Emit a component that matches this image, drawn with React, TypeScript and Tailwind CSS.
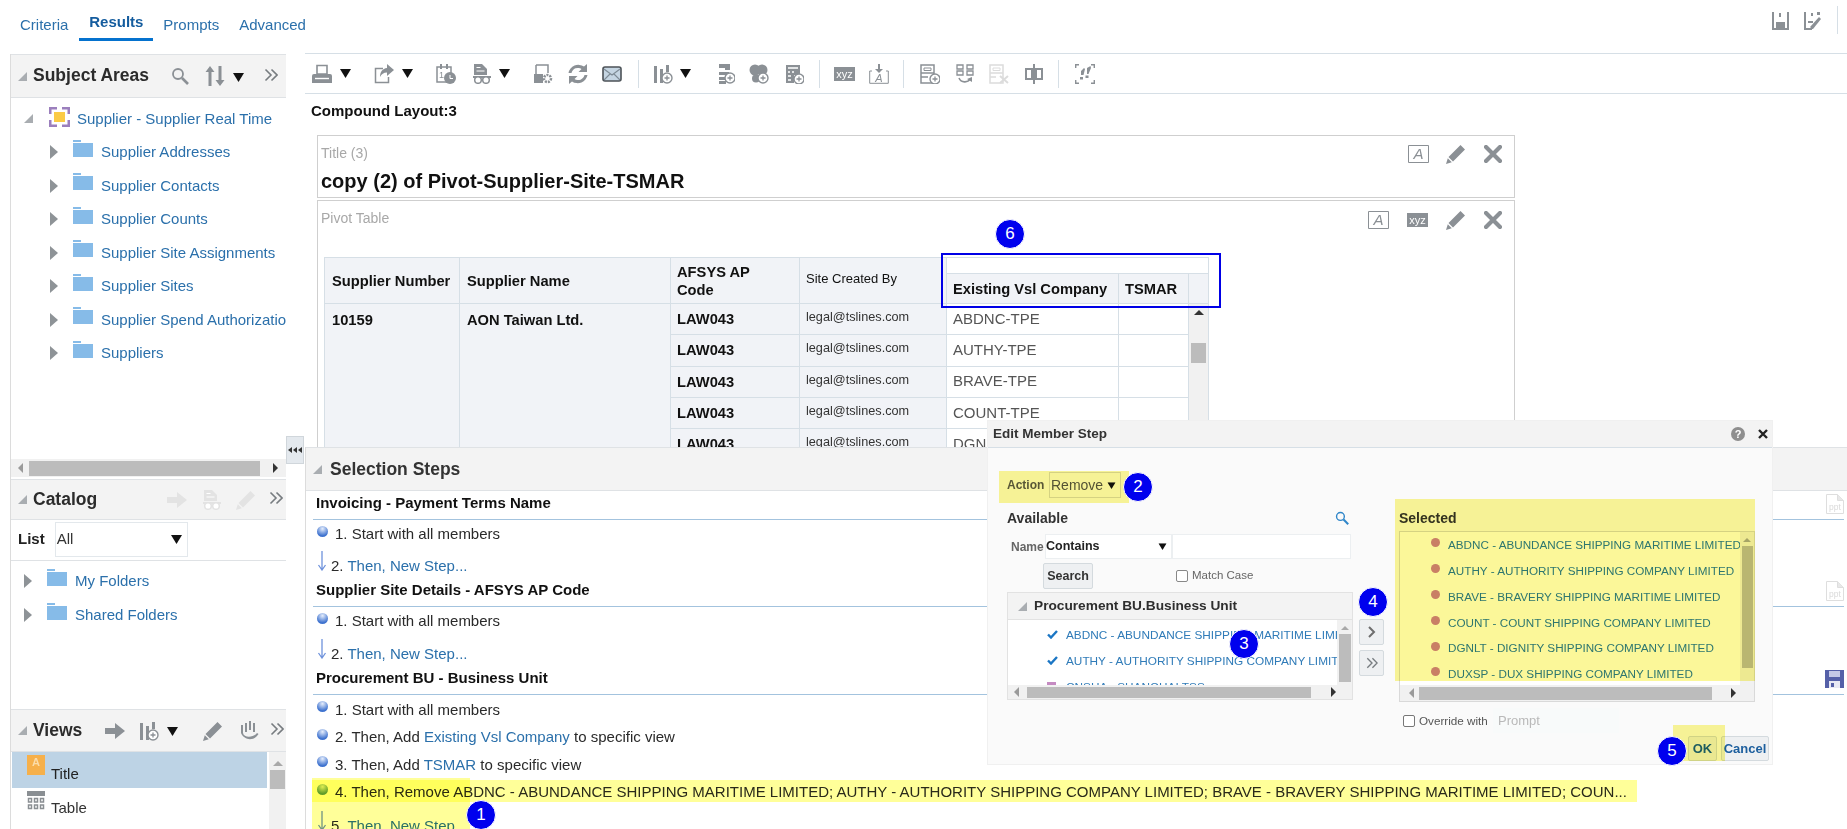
import React from "react";

type P = { className?: string };

const Gray = "text-[#8b9095]";

const Svg = ({ className = "", children, w = 20, h = 20 }: P & { children: React.ReactNode; w?: number; h?: number }) => (
  <svg viewBox={`0 0 ${w} ${h}`} width={w} height={h} className={`flex-none ${className}`} fill="currentColor">
    {children}
  </svg>
);

const Caret = ({ className = "" }: P) => (
  <svg viewBox="0 0 11 9" width="11" height="9" className={`flex-none ${className}`}><path d="M0 0h11L5.500 9z" fill="#111" /></svg>
);
const TriDown = ({ className = "" }: P) => (
  <svg viewBox="0 0 9 9" width="9" height="9" className={`flex-none ${className}`}><path d="M9 0v9H0z" fill="#a9adb1" /></svg>
);
const TriRight = ({ className = "" }: P) => (
  <svg viewBox="0 0 8 14" width="8" height="14" className={`flex-none ${className}`}><path d="M0 0l8 7-8 7z" fill="#8e9397" /></svg>
);
const Folder = ({ className = "" }: P) => (
  <svg viewBox="0 0 20 17" width="20" height="17" className={`flex-none ${className}`}>
    <path d="M0 0h8v2H0z" fill="#86bbe8" />
    <path d="M0 3h20v14H0z" fill="#86bbe8" />
  </svg>
);
const Chevrons = ({ className = "" }: P) => (
  <svg viewBox="0 0 14 14" width="14" height="14" className={`flex-none ${className}`} fill="none" stroke="#777c80" strokeWidth="1.600">
    <path d="M1.500 1.500L7 7l-5.500 5.500M7.500 1.500L13 7l-5.500 5.500" />
  </svg>
);
const Pencil = ({ className = "" }: P) => (
  <Svg className={className}>
    <path d="M14.500 1l4.500 4.500L7 17.500 2.500 13zM1.800 14.200l4 4L0 20z" />
  </Svg>
);
const Cross = ({ className = "" }: P) => (
  <svg viewBox="0 0 18 18" width="18" height="18" className={`flex-none ${className}`}>
    <path d="M2 2l14 14M16 2L2 16" stroke="currentColor" strokeWidth="4.200" strokeLinecap="round" />
  </svg>
);
const FrameA = ({ className = "" }: P) => (
  <svg viewBox="0 0 21 18" width="21" height="18" className={`flex-none ${className}`}>
    <path d="M4 .5H.5v17H4M17 .5h3.500v17H17M4 .5h13M4 17.500h13" fill="none" stroke="currentColor" />
    <text x="10.500" y="14" textAnchor="middle" fontSize="15" fontStyle="italic" fill="currentColor" fontFamily="Liberation Sans">A</text>
  </svg>
);
const Xyz = ({ className = "" }: P) => (
  <svg viewBox="0 0 21 14" width="21" height="14" className={`flex-none ${className}`}>
    <rect width="21" height="14" fill="currentColor" />
    <text x="10.500" y="11" textAnchor="middle" fontSize="11" fill="#fff" fontFamily="Liberation Sans">xyz</text>
  </svg>
);
const Plus = ({ x = 14, y = 14 }: { x?: number; y?: number }) => (
  <g>
    <circle cx={x} cy={y} r="5" fill="#fff" stroke="currentColor" strokeWidth="1.400" />
    <path d={`M${x - 2.500} ${y}h5M${x} ${y - 2.500}v5`} stroke="currentColor" strokeWidth="1.300" />
  </g>
);
const Printer = () => (
  <Svg><path d="M5 1.500h10V10H5z" fill="none" stroke="currentColor" strokeWidth="1.600" /><path d="M2 10h16a2 2 0 0 1 2 2v7H0v-7a2 2 0 0 1 2-2z" /><path d="M3 14.500h14" stroke="#fff" strokeWidth="1.400" /></Svg>
);
const Share = () => (
  <Svg><path d="M9 4.500H1.500v14h13V13" fill="none" stroke="currentColor" strokeWidth="1.500" /><path d="M13 0l7 6-7 6V8.500C9.500 8.500 7.500 10 6 13c0-5 2.500-8.500 7-9z" /></Svg>
);
const Sched = () => (
  <Svg><path d="M1 3h14v15H1z" fill="none" stroke="currentColor" strokeWidth="1.500" /><path d="M4 0h2v5H4zM10 0h2v5h-2z" /><text x="3" y="14" fontSize="9" fontFamily="Liberation Sans" fill="currentColor">1</text><circle cx="14" cy="14" r="6" /><path d="M14 11v3.500h3" stroke="#fff" fill="none" /></Svg>
);
const DocGlasses = () => (
  <Svg><path d="M2 0h8l5 5v6H2z" /><path d="M1 12h18v2H1z" /><path d="M4.500 3.500h4M4.500 7h8" stroke="#fff" /><circle cx="6" cy="16" r="3.300" fill="#fff" stroke="currentColor" strokeWidth="1.500" /><circle cx="14" cy="16" r="3.300" fill="#fff" stroke="currentColor" strokeWidth="1.500" /></Svg>
);
const DocGear = () => (
  <Svg><path d="M3 1h12v8M3 1v9" fill="none" stroke="currentColor" strokeWidth="1.500" /><path d="M1 10h9v9H1z" /><circle cx="14.500" cy="14.500" r="3.500" fill="none" stroke="currentColor" strokeWidth="2.500" strokeDasharray="2 1" /></Svg>
);
const Refresh = () => (
  <Svg><path d="M3.500 9a6.500 6.500 0 0 1 10-4l-3 3h8.500V0l-3 2.600A10 10 0 0 0 .500 9zM16.500 11a6.500 6.500 0 0 1-10 4l3-3H1v8l3-2.600A10 10 0 0 0 19.500 11z" /></Svg>
);
const Mail = () => (
  <Svg><rect x="1" y="3" width="18" height="14" rx="2" fill="#c5d5e2" stroke="#4c5257" strokeWidth="1.600" /><path d="M2 5l8 6 8-6M2 16l6-6M18 16l-6-6" fill="none" stroke="#7e8b95" strokeWidth="1.100" /></Svg>
);
const ChartPlus = () => (
  <Svg><path d="M1 2h3v17H1zM7 5h3v14H7zM13 1h3v7h-3z" /><Plus /></Svg>
);
const ListPlus = () => (
  <Svg w={16}><path d="M0 0h11v6H6V4H0zM0 8h10v3H0zM0 13h7v3H0zM0 17h7v3H0z" /><Plus x={11} y={14} /></Svg>
);
const CirclesPlus = () => (
  <Svg><circle cx="6" cy="6" r="5.500" /><circle cx="13" cy="6" r="5.500" /><circle cx="7" cy="14.500" r="4" /><Plus /></Svg>
);
const CalcPlus = () => (
  <svg viewBox="0 0 18 20" width="18" height="20" className="flex-none" fill="currentColor"><path d="M0 1h14v10H8v8H0z" /><path d="M2 4h10M2 8h2M6 8h2M2 12h3M2 16h3" stroke="#fff" strokeWidth="1.500" /><Plus x={13} y={15} /></svg>
);
const ArrowInA = () => (
  <Svg><path d="M3 7H.7v12.300h18.600V7H17" fill="none" stroke="currentColor" /><path d="M9 0h2v5h3l-4 4-4-4h3z" /><text x="10" y="18" textAnchor="middle" fontSize="11" fontStyle="italic" fontFamily="Liberation Sans">A</text></Svg>
);
const BoxesPlus = () => (
  <Svg><path d="M1 1h13v18H1z" fill="none" stroke="currentColor" strokeWidth="1.500" /><path d="M1 9h13M1 13h7" stroke="currentColor" strokeWidth="1.500" /><path d="M4 4h7v2.500H4z" fill="none" stroke="currentColor" /><Plus x={15} y={15} /></Svg>
);
const BoxesCurve = () => (
  <svg viewBox="0 0 18 20" width="18" height="20" className="flex-none" fill="none" stroke="currentColor" strokeWidth="1.300"><path d="M1 1h6v4H1zM1 7h6v4H1zM11 1h6v4h-6zM11 7h6v4h-6z" /><path d="M3 14c2 5 9 5 11 1" strokeWidth="1.600" /><path d="M11 15l5-2v5z" fill="currentColor" stroke="none" /></svg>
);
const BoxesX = () => (
  <Svg className="text-[#dcdcdc]"><path d="M1 1h13v18H1z" fill="none" stroke="currentColor" strokeWidth="1.500" /><path d="M1 9h13M1 13h6" stroke="currentColor" strokeWidth="1.500" /><path d="M4 4h7v2.500H4z" fill="none" stroke="currentColor" /><path d="M11 12l8 7M19 12l-8 7" stroke="currentColor" strokeWidth="2" /></Svg>
);
const Column = () => (
  <Svg><path d="M9 0h2v20H9z" /><path d="M2 5h6v10H2zM12 5h6v10h-6z" fill="none" stroke="currentColor" strokeWidth="2" /></Svg>
);
const Steps = () => (
  <Svg><path d="M4 .7H.7V4M16 .7h3.300V4M4 19.300H.7V16M16 19.300h3.300V16" fill="none" stroke="currentColor" strokeWidth="1.400" /><path d="M6 7l3-3 1 1-1.500 6H6zM5 13h3v2.500H5zM12 4l3.500-2 .5 2-2.500 6H12zM10.500 11.500h3V14h-3z" /></Svg>
);
const Magnifier = ({ className = "" }: P) => (
  <svg viewBox="0 0 18 18" width="18" height="18" className={`flex-none ${className}`} fill="none" stroke="currentColor"><circle cx="7" cy="7" r="5" strokeWidth="1.800" /><path d="M11 11l6 6" strokeWidth="2.600" /></svg>
);
const Sort = () => (
  <Svg className={Gray}><path d="M5 0l4.500 6H6.500v14h-3V6H.500zM15 20l-4.500-6h3V0h3v14h3z" /></Svg>
);
const ArrowFat = ({ className = "" }: P) => (
  <Svg className={className}><path d="M0 7h10V2l10 8-10 8v-5H0z" /></Svg>
);
const GesturePlus = () => (
  <Svg><path d="M5 2h2v9H5zM9 0h2v9H9zM13 2h2v9h-2z" /><path d="M1 4h2v8c1 5 10 5 14 0l1.500 1c-4 7-14 7-17.500-1z" /></Svg>
);
const TitleIcon = () => (
  <svg viewBox="0 0 18 20" width="18" height="20" className="flex-none"><rect width="18" height="20" fill="#f6b04b" /><text x="9" y="11" textAnchor="middle" fontSize="11" fill="#fbdca9" fontFamily="Liberation Sans" fontWeight="700">A</text></svg>
);
const GridIcon = () => (
  <svg viewBox="0 0 18 20" width="18" height="20" className="flex-none"><path d="M0 0h18v5H0z" fill="#8a8f93" /><path d="M1.500 7.500h3v3.500h-3zM7.500 7.500h3v3.500h-3zM13.500 7.500h3v3.500h-3zM1.500 14h3v3.500h-3zM7.500 14h3v3.500h-3zM13.500 14h3v3.500h-3z" fill="none" stroke="#8a8f93" strokeWidth="1.500" /></svg>
);
const SubjectIcon = () => (
  <svg viewBox="0 0 21 20" width="21" height="20" className="flex-none">
    <path d="M0 0h8v2.500H2.500V7H0zM13 0h8v7h-2.500V2.500H13zM0 13h2.500v4.500H8V20H0zM18.500 13H21v7h-8v-2.500h5.500z" fill="#9b7fbd" />
    <rect x="5" y="5" width="11" height="10" fill="#fbcb45" />
  </svg>
);
const PptDoc = () => (
  <svg viewBox="0 0 18 20" width="18" height="20" className="flex-none">
    <path d="M.5.500h11l6 6v13H.5z" fill="#fff" stroke="#dedede" />
    <path d="M11.500.500v6h6" fill="#e8e8e8" stroke="#dedede" />
    <text x="9" y="16" textAnchor="middle" fontSize="8.500" fill="#dadada" fontFamily="Liberation Sans">ppt</text>
  </svg>
);
const SaveBlue = () => (
  <svg viewBox="0 0 19 18" width="19" height="18" className="flex-none">
    <path d="M0 0h19v18H0z" fill="#5560a8" /><path d="M4 1h11v6H4z" fill="#c4c8e6" /><path d="M4 11h11v7H4z" fill="#e8e9f4" /><path d="M6 13h3v4H6z" fill="#5560a8" />
  </svg>
);
const SaveTop = () => (
  <svg viewBox="0 0 17 18" width="17" height="18" className="flex-none text-[#8b9095]">
    <path d="M0 0h2v18H0zM15 0h2v18h-2zM2 16h13v2H2zM4 10h9v6H4z" fill="currentColor" /><path d="M7 1h2v4H7z" fill="currentColor" />
  </svg>
);
const SaveAsTop = () => (
  <svg viewBox="0 0 17 18" width="17" height="18" className="flex-none text-[#8b9095]">
    <path d="M0 0h2v18H0zM2 16h6v2H2zM4 9h5v2H4zM7 1h2v3H7zM13 0h3v3h-3z" fill="currentColor" /><path d="M15 5l2 2-8 10H6.500v-2.500z" fill="currentColor" />
  </svg>
);

const Bullet = ({ green = false }: { green?: boolean }) => (
  <span className={`block flex-none w-[11px] h-[11px] rounded-full -mt-[6px] ${green ? "bg-[radial-gradient(circle_at_50%_25%,#dfeedd,#5f9c70_70%)]" : "bg-[radial-gradient(circle_at_50%_25%,#e6eefc,#3f73cf_70%)]"}`} />
);
const DownArrow = () => (
  <svg viewBox="0 0 10 20" width="10" height="20" className="flex-none -mt-[10px]" fill="none" stroke="#6f93dc" strokeWidth="1.300"><path d="M5 0v18M1.500 14L5 19l3.500-5" /></svg>
);

const Link = ({ children }: { children: React.ReactNode }) => <span className="text-[#2b70ab]">{children}</span>;

function PanelHead({ title, children, h, tri = "ml-[7px]" }: { title: string; children?: React.ReactNode; h: string; tri?: string }) {
  return (
    <div className={`flex items-center flex-none border-y border-[#dfe2e5] bg-[#f3f3f3] ${h}`}>
      <TriDown className={tri} />
      <span className="ml-[6px] -mt-[1px] text-[17.500px] font-bold text-[#2b2b2b]">{title}</span>
      {children}
    </div>
  );
}

const TreeRow = ({ label, root = false }: { label: string; root?: boolean }) =>
  root ? (
    <div className="flex items-center h-[33.500px] whitespace-nowrap">
      <TriDown className="ml-[13px]" />
      <span className="ml-[16px] -mt-[4px]"><SubjectIcon /></span>
      <span className="ml-[7px] text-[15px] text-[#2b70ab]">{label}</span>
    </div>
  ) : (
    <div className="flex items-center h-[33.500px] whitespace-nowrap">
      <TriRight className="ml-[39px]" />
      <span className="ml-[15px] -mt-[8px]"><Folder /></span>
      <span className="ml-[8px] text-[15px] text-[#2b70ab]">{label}</span>
    </div>
  );

const HScroll = ({ h, thumb, left, right }: { h: string; thumb: string; left: string; right: string }) => (
  <div className={`flex items-center bg-[#f1f1f1] flex-none ${h}`}>
    <svg viewBox="0 0 5 10" width="5" height="10" className={`flex-none ${left}`}><path d="M5 0L0 5l5 5z" fill="#9a9a9a" /></svg>
    <div className={`h-[calc(100%-3px)] bg-[#bcbcbc] ${thumb}`} />
    <svg viewBox="0 0 5 10" width="5" height="10" className={`flex-none ${right}`}><path d="M0 0l5 5-5 5z" fill="#333" /></svg>
  </div>
);

function Left() {
  return (
    <div className="flex flex-col flex-none w-[276px] ml-[10px] h-[775px] border-l border-[#dcdcdc]">
      {/* Subject Areas */}
      <div className="flex flex-col h-[423px] flex-none">
        <PanelHead title="Subject Areas" h="h-[44px]">
          <Magnifier className={`ml-[22px] ${Gray}`} />
          <span className="ml-[16px]"><Sort /></span>
          <Caret className="ml-[8px] mt-[3px]" />
          <Chevrons className="ml-[20px] -mt-[3px]" />
        </PanelHead>
        <div className="flex-1 overflow-hidden pt-[4px]">
          <TreeRow root label="Supplier - Supplier Real Time" />
          {["Supplier Addresses", "Supplier Contacts", "Supplier Counts", "Supplier Site Assignments", "Supplier Sites", "Supplier Spend Authorization", "Suppliers"].map((t) => (
            <TreeRow key={t} label={t} />
          ))}
        </div>
        <HScroll h="h-[18px]" thumb="w-[231px] ml-[6px]" left="ml-[7px]" right="ml-[13px]" />
      </div>
      {/* Catalog */}
      <div className="flex flex-col h-[230px] flex-none mt-[2px]">
        <PanelHead title="Catalog" h="h-[41px]">
          <ArrowFat className="ml-[70px] text-[#e3e3e3]" />
          <span className="ml-[15px] text-[#e3e3e3]"><DocGlasses /></span>
          <Pencil className="ml-[14px] text-[#e3e3e3]" />
          <Chevrons className="ml-[13px] -mt-[3px]" />
        </PanelHead>
        <div className="flex items-center h-[41px] flex-none border-b border-[#dfe2e5] pb-[1px]">
          <span className="ml-[7px] text-[15px] font-bold text-[#222]">List</span>
          <div className="flex items-center justify-between w-[133px] h-[35px] ml-[10px] border border-[#e3e8ec] px-[1px] pr-[5px] text-[15px] text-[#333]">
            All <Caret />
          </div>
        </div>
        <div className="flex-1 pt-[3px]">
          {["My Folders", "Shared Folders"].map((t) => (
            <div key={t} className="flex items-center h-[34px] whitespace-nowrap">
              <TriRight className="ml-[13px]" />
              <span className="ml-[15px] -mt-[8px]"><Folder /></span>
              <span className="ml-[8px] text-[15px] text-[#2b70ab]">{t}</span>
            </div>
          ))}
        </div>
      </div>
      {/* Views */}
      <div className="flex flex-col flex-1 min-h-0">
        <PanelHead title="Views" h="h-[43px]">
          <ArrowFat className={`ml-[23px] ${Gray}`} />
          <span className={`ml-[14px] ${Gray}`}><ChartPlus /></span>
          <Caret className="ml-[8px] mt-[2px]" />
          <Pencil className={`ml-[25px] ${Gray}`} />
          <span className={`ml-[17px] ${Gray}`}><GesturePlus /></span>
          <Chevrons className="ml-[10px] -mt-[3px]" />
        </PanelHead>
        <div className="flex flex-1 min-h-0">
          <div className="flex-1 pl-[1px]">
            <div className="flex items-center h-[36px] bg-[#bdd3e5]">
              <span className="ml-[15px] -mt-[10px]"><TitleIcon /></span>
              <span className="ml-[6px] mt-[8px] text-[15px] text-[#222]">Title</span>
            </div>
            <div className="flex items-center h-[36px]">
              <span className="ml-[15px] -mt-[10px]"><GridIcon /></span>
              <span className="ml-[6px] mt-[5px] text-[15px] text-[#333]">Table</span>
            </div>
          </div>
          <div className="flex flex-col items-center w-[17px] ml-[2px] bg-[#f1f1f1] pt-[9px]">
            <svg viewBox="0 0 10 5" width="10" height="5"><path d="M5 0l5 5H0z" fill="#a9a9a9" /></svg>
            <div className="w-[15px] h-[19px] mt-[4px] bg-[#bcbcbc]" />
          </div>
        </div>
      </div>
    </div>
  );
}

const Toolbar = () => (
  <div className={`flex items-center flex-none h-[41px] border-y border-[#d6dfe6] pl-[7px] ${Gray}`}>
    <Printer /><Caret className="ml-[8px]" />
    <span className="ml-[23px]"><Share /></span><Caret className="ml-[8px]" />
    <span className="ml-[23px]"><Sched /></span>
    <span className="ml-[16px]"><DocGlasses /></span><Caret className="ml-[7px]" />
    <span className="ml-[23px]"><DocGear /></span>
    <span className="ml-[15px]"><Refresh /></span>
    <span className="ml-[14px]"><Mail /></span>
    <div className="w-px h-[28px] bg-[#d6dfe6] ml-[16px]" />
    <span className="ml-[14px]"><ChartPlus /></span><Caret className="ml-[7px]" />
    <span className="ml-[28px]"><ListPlus /></span>
    <span className="ml-[14px]"><CirclesPlus /></span>
    <span className="ml-[17px]"><CalcPlus /></span>
    <div className="w-px h-[28px] bg-[#d6dfe6] ml-[15px]" />
    <span className="ml-[14px]"><Xyz /></span>
    <span className="ml-[14px]"><ArrowInA /></span>
    <div className="w-px h-[28px] bg-[#d6dfe6] ml-[14px]" />
    <span className="ml-[16px]"><BoxesPlus /></span>
    <span className="ml-[16px]"><BoxesCurve /></span>
    <span className="ml-[15px]"><BoxesX /></span>
    <span className="ml-[15px]"><Column /></span>
    <div className="w-px h-[28px] bg-[#d6dfe6] ml-[14px]" />
    <span className="ml-[16px]"><Steps /></span>
  </div>
);

const th = "border border-[#d6dfe6] bg-[#f1f3f7] px-[7px] text-left text-[14.700px] font-bold text-[#111] leading-[18px]";
const tdHead = "border border-[#d6dfe6] bg-[#f1f3f7] px-[7px] align-top pt-[5px] text-[14.700px] font-bold text-[#111]";
const tdPlain = "border border-[#d6dfe6] px-[6px] text-[15px] text-[#555]";

function Pivot() {
  const rows = ["ABDNC-TPE", "AUTHY-TPE", "BRAVE-TPE", "COUNT-TPE", "DGNLT-TPE"];
  return (
    <table className="table-fixed border-collapse w-[884px]">
      <colgroup>
        <col className="w-[135px]" /><col className="w-[211px]" /><col className="w-[129px]" /><col className="w-[147px]" />
        <col className="w-[172px]" /><col className="w-[70px]" /><col className="w-[20px]" />
      </colgroup>
      <thead>
        <tr className="h-[16px]">
          <th rowSpan={2} className={`${th} whitespace-nowrap`}>Supplier Number</th>
          <th rowSpan={2} className={th}>Supplier Name</th>
          <th rowSpan={2} className={`${th} !px-[6px]`}>AFSYS AP<br />Code</th>
          <th rowSpan={2} className={`${th} !px-[6px] !font-normal !text-[13px] pb-[3px]`}>Site Created By</th>
          <th colSpan={3} className="border border-[#d6dfe6] bg-white" />
        </tr>
        <tr className="h-[30px]">
          <th className={`${th} !px-[6px] whitespace-nowrap`}>Existing Vsl Company</th>
          <th className={`${th} !px-[6px]`}>TSMAR</th>
          <th className="border border-[#d6dfe6] bg-[#f1f3f7]" />
        </tr>
      </thead>
      <tbody>
        {rows.map((r, i) => (
          <tr key={r} className="h-[31.300px]">
            {i === 0 && <td rowSpan={5} className={tdHead}>10159</td>}
            {i === 0 && <td rowSpan={5} className={tdHead}>AON Taiwan Ltd.</td>}
            <td className="border border-[#d6dfe6] bg-[#f1f3f7] px-[6px] text-[14.700px] font-bold text-[#111]">LAW043</td>
            <td className="border border-[#d6dfe6] bg-[#f1f3f7] px-[6px] pb-[3px] text-[12.700px] text-[#333]">legal@tslines.com</td>
            <td className={tdPlain}>{r}</td>
            <td className="border border-[#d6dfe6]" />
            {i === 0 && (
              <td rowSpan={5} className="border border-[#d6dfe6] bg-[#f1f1f1] align-top pt-[6px] px-[2px]">
                <svg viewBox="0 0 10 5" width="10" height="5" className="mx-auto"><path d="M5 0l5 5H0z" fill="#333" /></svg>
                <div className="w-[15px] h-[20px] mt-[28px] mx-auto bg-[#bcbcbc]" />
              </td>
            )}
          </tr>
        ))}
      </tbody>
    </table>
  );
}

function StepRow({ children, h = "h-[27.500px]" }: { children: React.ReactNode; h?: string }) {
  return <div className={`flex items-center gap-[7px] whitespace-nowrap text-[15px] text-[#2a2a2a] ${h}`}>{children}</div>;
}

function Section({ title, icon, children }: { title: string; icon: React.ReactNode; children: React.ReactNode }) {
  return (
    <div className="flex flex-col">
      <div className="flex items-center justify-between h-[28px] border-b border-[#a3c3de] ml-[7px] mr-[3px] box-content flex-none">
        <span className="ml-[3px] -mt-[4px] text-[15px] font-bold text-[#111]">{title}</span>
        <span className="-mt-[3px]">{icon}</span>
      </div>
      <div className="ml-[11px]">{children}</div>
    </div>
  );
}

function Selection() {
  return (
    <div className="flex flex-col flex-1 min-h-0 overflow-hidden border-l border-[#dcdcdc]">
      <div className="flex items-center flex-none h-[44px] border-y border-[#dfe2e5] bg-[#f3f3f3]">
        <TriDown className="ml-[7px]" />
        <span className="ml-[8px] text-[17.500px] font-bold text-[#333]">Selection Steps</span>
      </div>
      <Section title="Invoicing - Payment Terms Name" icon={<PptDoc />}>
        <StepRow h="h-[28px]"><Bullet /><span>1. Start with all members</span></StepRow>
        <StepRow h="h-[30px] pt-[6px]"><DownArrow /><span className="-ml-[3px]">2. <Link>Then, New Step...</Link></span></StepRow>
      </Section>
      <Section title="Supplier Site Details - AFSYS AP Code" icon={<PptDoc />}>
        <StepRow h="h-[29px]"><Bullet /><span>1. Start with all members</span></StepRow>
        <StepRow h="h-[30px] pt-[6px]"><DownArrow /><span className="-ml-[3px]">2. <Link>Then, New Step...</Link></span></StepRow>
      </Section>
      <Section title="Procurement BU - Business Unit" icon={<SaveBlue />}>
        <div className="h-[1px]" />
        <StepRow><Bullet /><span>1. Start with all members</span></StepRow>
        <StepRow><Bullet /><span>2. Then, Add <Link>Existing Vsl Company</Link> to specific view</span></StepRow>
        <StepRow><Bullet /><span>3. Then, Add <Link>TSMAR</Link> to specific view</span></StepRow>
        <StepRow><Bullet green /><span>4. Then, Remove ABDNC - ABUNDANCE SHIPPING MARITIME LIMITED; AUTHY - AUTHORITY SHIPPING COMPANY LIMITED; BRAVE - BRAVERY SHIPPING MARITIME LIMITED; COUN...</span></StepRow>
        <StepRow h="h-[34px] pt-[6px]"><DownArrow /><span className="-ml-[3px]">5. <Link>Then, New Step...</Link></span></StepRow>
      </Section>
    </div>
  );
}

const Ctl = ({ className = "", children }: P & { children?: React.ReactNode }) => (
  <div className={`flex items-center bg-white border border-[#eceff1] flex-none ${className}`}>{children}</div>
);
const Btn = ({ className = "", children }: P & { children?: React.ReactNode }) => (
  <div className={`flex items-center justify-center flex-none rounded-[2px] border border-[#d4dade] bg-[#eef0f2] font-bold ${className}`}>{children}</div>
);
const Check = () => (
  <svg viewBox="0 0 11 9" width="11" height="9" className="flex-none -mt-[3px]"><path d="M1 4.500L4 7.500 10 1" fill="none" stroke="#1b76c4" strokeWidth="2.400" /></svg>
);

function Dialog() {
  const selected = [
    "ABDNC - ABUNDANCE SHIPPING MARITIME LIMITED",
    "AUTHY - AUTHORITY SHIPPING COMPANY LIMITED",
    "BRAVE - BRAVERY SHIPPING MARITIME LIMITED",
    "COUNT - COUNT SHIPPING COMPANY LIMITED",
    "DGNLT - DIGNITY SHIPPING COMPANY LIMITED",
    "DUXSP - DUX SHIPPING COMPANY LIMITED",
  ];
  return (
    <div className="absolute left-[987px] top-[420px] z-10 flex flex-col w-[786px] h-[345px] bg-[#fafafa] border border-[#f0f0f0]">
      <div className="flex items-center flex-none h-[27px] border-b border-[#d6dfe6] bg-[#f3f3f3]">
        <span className="ml-[5px] text-[13.500px] font-bold text-[#333]">Edit Member Step</span>
        <span className="ml-auto flex items-center justify-center w-[14px] h-[14px] rounded-full bg-[#8e8e8e] text-white text-[11px] font-bold">?</span>
        <svg viewBox="0 0 10 10" width="10" height="10" className="ml-[13px] mr-[4px]"><path d="M1 1l8 8M9 1L1 9" stroke="#222" strokeWidth="2.400" /></svg>
      </div>
      <div className="flex h-[285px] flex-none pl-[19px]">
        <div className="flex flex-col w-[346px] flex-none pt-[24px]">
          <div className="flex items-center h-[26px] flex-none">
            <span className="w-[42px] flex-none text-[12px] font-bold text-[#5a5a5a]">Action</span>
            <div className="flex items-center justify-between w-[72px] h-[26px] border border-[#d9d9d9] pl-[1px] pr-[3px] text-[14px] text-[#555]">
              Remove <Caret className="scale-75" />
            </div>
          </div>
          <div className="flex items-center justify-between h-[20px] mt-[10px] flex-none">
            <span className="text-[14px] font-bold text-[#333]">Available</span>
            <Magnifier className="w-[14px] h-[14px] mr-[4px] text-[#2f86c9]" />
          </div>
          <div className="flex items-center h-[25px] mt-[6px] flex-none">
            <span className="ml-[4px] w-[34px] flex-none text-[12px] font-bold text-[#666]">Name</span>
            <Ctl className="w-[127px] h-[25px] justify-between pr-[3px] text-[12.500px] font-bold text-[#222]">Contains <Caret className="scale-75" /></Ctl>
            <Ctl className="w-[179px] h-[25px]" />
          </div>
          <div className="flex items-center h-[26px] mt-[4px] flex-none">
            <Btn className="w-[50px] h-[26px] ml-[36px] text-[12.500px] text-[#333]">Search</Btn>
            <span className="w-[12px] h-[12px] ml-[83px] rounded-[2px] border border-[#888] bg-white" />
            <span className="ml-[4px] text-[11.500px] text-[#666]">Match Case</span>
          </div>
          <div className="flex flex-col h-[108px] mt-[3px] flex-none border border-[#e2e2e2]">
            <div className="flex items-center flex-none h-[27px] border-b border-[#e2e2e2] bg-[#f3f3f3]">
              <TriDown className="ml-[10px]" />
              <span className="ml-[7px] text-[13.700px] font-bold text-[#2e2e2e]">Procurement BU.Business Unit</span>
            </div>
            <div className="flex flex-1 min-h-0">
              <div className="flex-1 min-w-0 bg-white overflow-hidden text-[11.800px] text-[#2f7bb8] whitespace-nowrap pt-[3px]">
                <div className="flex items-center h-[26px]"><span className="ml-[39px] flex-none"><Check /></span><span className="ml-[8px]">ABDNC - ABUNDANCE SHIPPING MARITIME LIMITED</span></div>
                <div className="flex items-center h-[26px]"><span className="ml-[39px] flex-none"><Check /></span><span className="ml-[8px]">AUTHY - AUTHORITY SHIPPING COMPANY LIMITED</span></div>
                <div className="flex items-center h-[26px]"><span className="ml-[39px] flex-none w-[9px] h-[9px] bg-[#c58bc2] -mt-[3px]" /><span className="ml-[10px]">CNSHA - SHANGHAI TSS</span></div>
              </div>
              <div className="flex flex-col items-center w-[15px] flex-none bg-[#f1f1f1] pt-[6px]">
                <svg viewBox="0 0 10 5" width="8" height="4"><path d="M5 0l5 5H0z" fill="#a9a9a9" /></svg>
                <div className="w-[12px] h-[48px] mt-[4px] bg-[#bcbcbc]" />
              </div>
            </div>
            <HScroll h="h-[14px]" thumb="w-[284px] ml-[8px]" left="ml-[6px]" right="ml-[20px]" />
          </div>
        </div>
        <div className="flex flex-col gap-[5px] w-[25px] ml-[6px] flex-none pt-[171px]">
          <Btn className="w-[25px] h-[26px]"><svg viewBox="0 0 8 12" width="8" height="12"><path d="M1 1l5 5-5 5" fill="none" stroke="#6e6e6e" strokeWidth="2" /></svg></Btn>
          <Btn className="w-[25px] h-[26px]"><Chevrons className="w-[12px] h-[12px]" /></Btn>
        </div>
        <div className="flex flex-col w-[356px] ml-[15px] flex-none pt-[60px]">
          <span className="h-[20px] flex items-center text-[14px] font-bold text-[#333]">Selected</span>
          <div className="flex flex-col h-[171px] mt-[3px] flex-none border border-[#d9d9d9] bg-white">
            <div className="flex flex-1 min-h-0">
              <div className="flex-1 min-w-0 overflow-hidden whitespace-nowrap text-[11.700px] text-[#2f7bb8]">
                {selected.map((s) => (
                  <div key={s} className="flex items-center h-[25.800px]">
                    <span className="block flex-none ml-[31px] w-[9px] h-[9px] rounded-full bg-[#cc83a8] -mt-[4px]" />
                    <span className="ml-[8px]">{s}</span>
                  </div>
                ))}
              </div>
              <div className="flex flex-col items-center w-[14px] flex-none bg-[#f1f1f1] pt-[6px]">
                <svg viewBox="0 0 10 5" width="8" height="4"><path d="M5 0l5 5H0z" fill="#a9a9a9" /></svg>
                <div className="w-[11px] h-[122px] mt-[4px] bg-[#bcbcbc]" />
              </div>
            </div>
            <HScroll h="h-[16px]" thumb="w-[293px] ml-[5px]" left="ml-[9px]" right="ml-[19px]" />
          </div>
          <div className="flex items-center h-[25px] mt-[6px] flex-none">
            <span className="w-[12px] h-[12px] ml-[4px] rounded-[2px] border border-[#777] bg-white flex-none" />
            <span className="ml-[4px] w-[74px] flex-none text-[11.700px] text-[#555]">Override with</span>
            <div className="flex items-center w-[126px] h-[25px] pl-[5px] bg-[#f8fafa] text-[13px] text-[#b9b9b9]">Prompt</div>
          </div>
        </div>
      </div>
      <div className="flex justify-end gap-[4px] pr-[3px] mt-[3px] flex-none">
        <Btn className="w-[29px] h-[25px] text-[13px] text-[#1d5f9e]">OK</Btn>
        <Btn className="w-[48px] h-[25px] text-[13px] text-[#1d5f9e]">Cancel</Btn>
      </div>
      {/* annotation highlights, placed over the dialog */}
      <div className="absolute left-[11px] top-[50px] w-[130px] h-[32px] bg-[#fbf799] mix-blend-multiply" />
      <div className="absolute left-[407px] top-[78px] w-[360px] h-[182px] bg-[#fbf799] mix-blend-multiply" />
      <div className="absolute left-[685px] top-[304px] w-[52px] h-[36px] bg-[#fbf799] mix-blend-multiply" />
    </div>
  );
}

const Badge = ({ n, className }: { n: number; className: string }) => (
  <div className={`absolute z-20 flex items-center justify-center w-[30px] h-[30px] rounded-full bg-[#0000ee] text-white text-[17px] border border-white ${className}`}>{n}</div>
);

export default function App() {
  return (
    <div className="relative w-[1847px] h-[829px] overflow-hidden bg-white font-['Liberation_Sans',Arial,sans-serif]">
      {/* Tabs */}
      <div className="flex items-start h-[54px] text-[15px] text-[#2b70ab]">
        <span className="ml-[20px] mt-[14px]">Criteria</span>
        <span className="ml-[11px] mt-[11px] h-[30px] w-[74px] text-center font-bold text-[#145c9e] border-b-[3px] border-[#0572ce]">Results</span>
        <span className="ml-[10px] mt-[14px]">Prompts</span>
        <span className="ml-[20px] mt-[14px]">Advanced</span>
        <div className="ml-auto mt-[12px] flex items-start">
          <SaveTop />
          <span className="ml-[15px]"><SaveAsTop /></span>
          <div className="ml-[16px] -mt-[6px] w-px h-[28px] bg-[#d6dfe6] mr-[9px]" />
        </div>
      </div>
      {/* Body */}
      <div className="flex h-[775px]">
        <Left />
        <div className="flex flex-col flex-none w-[1542px] ml-[19px] -mt-[1px] h-[776px]">
          <div className="flex flex-col flex-none h-[394px] overflow-hidden">
            <Toolbar />
            <div className="flex items-center h-[41px] flex-none pl-[6px] pb-[6px] text-[15px] font-bold text-[#111]">Compound Layout:3</div>
            <div className="flex flex-col flex-none w-[1198px] h-[63px] ml-[12px] border border-[#cfcfcf]">
              <div className="flex items-center justify-end h-[34px] flex-none pl-[3px] pr-[12px] relative">
                <span className="mr-auto text-[14px] text-[#a8a8a8]">Title (3)</span>
                <span className={`mt-[2px] ${Gray}`}><FrameA /></span>
                <span className={`ml-[17px] mt-[2px] ${Gray}`}><Pencil /></span>
                <span className={`ml-[18px] mt-[2px] ${Gray}`}><Cross /></span>
              </div>
              <div className="pl-[3px] -mt-[4px] text-[20px] font-bold text-[#111] whitespace-nowrap">copy (2) of Pivot-Supplier-Site-TSMAR</div>
            </div>
            <div className="flex flex-col flex-none w-[1198px] h-[300px] mt-[2px] ml-[12px] border border-[#cfcfcf]">
              <div className="flex items-center justify-end h-[34px] flex-none pl-[3px] pr-[12px]">
                <span className="mr-auto text-[14px] text-[#a8a8a8]">Pivot Table</span>
                <span className={`mt-[3px] ${Gray}`}><FrameA /></span>
                <span className={`ml-[18px] mt-[3px] ${Gray}`}><Xyz /></span>
                <span className={`ml-[18px] mt-[3px] ${Gray}`}><Pencil /></span>
                <span className={`ml-[18px] mt-[3px] ${Gray}`}><Cross /></span>
              </div>
              <div className="mt-[22px] ml-[6px]"><Pivot /></div>
            </div>
          </div>
          <Selection />
        </div>
      </div>

      {/* Splitter handle */}
      <div className="absolute left-[286px] top-[436px] flex items-center justify-center gap-[1px] w-[18px] h-[28px] bg-[#e4e9ee] border border-[#d0d6db]">
        {[0, 1, 2].map((i) => (
          <svg key={i} viewBox="0 0 4 6" width="4" height="6"><path d="M4 0L0 3l4 3z" fill="#333" /></svg>
        ))}
      </div>

      {/* Annotations */}
      <div className="absolute left-[941px] top-[253px] w-[280px] h-[55px] border-2 border-[#0000e6]" />
      <div className="absolute left-[312px] top-[780px] w-[1325px] h-[22px] bg-[#ffff99] mix-blend-multiply" />
      <div className="absolute left-[312px] top-[778px] w-[158px] h-[51px] bg-[#ffff99] mix-blend-multiply" />

      <Dialog />

      <Badge n={6} className="left-[995px] top-[219px]" />
      <Badge n={1} className="left-[466px] top-[800px]" />
      <Badge n={2} className="left-[1123px] top-[472px]" />
      <Badge n={3} className="left-[1229px] top-[629px]" />
      <Badge n={4} className="left-[1358px] top-[587px]" />
      <Badge n={5} className="left-[1657px] top-[736px]" />
    </div>
  );
}
